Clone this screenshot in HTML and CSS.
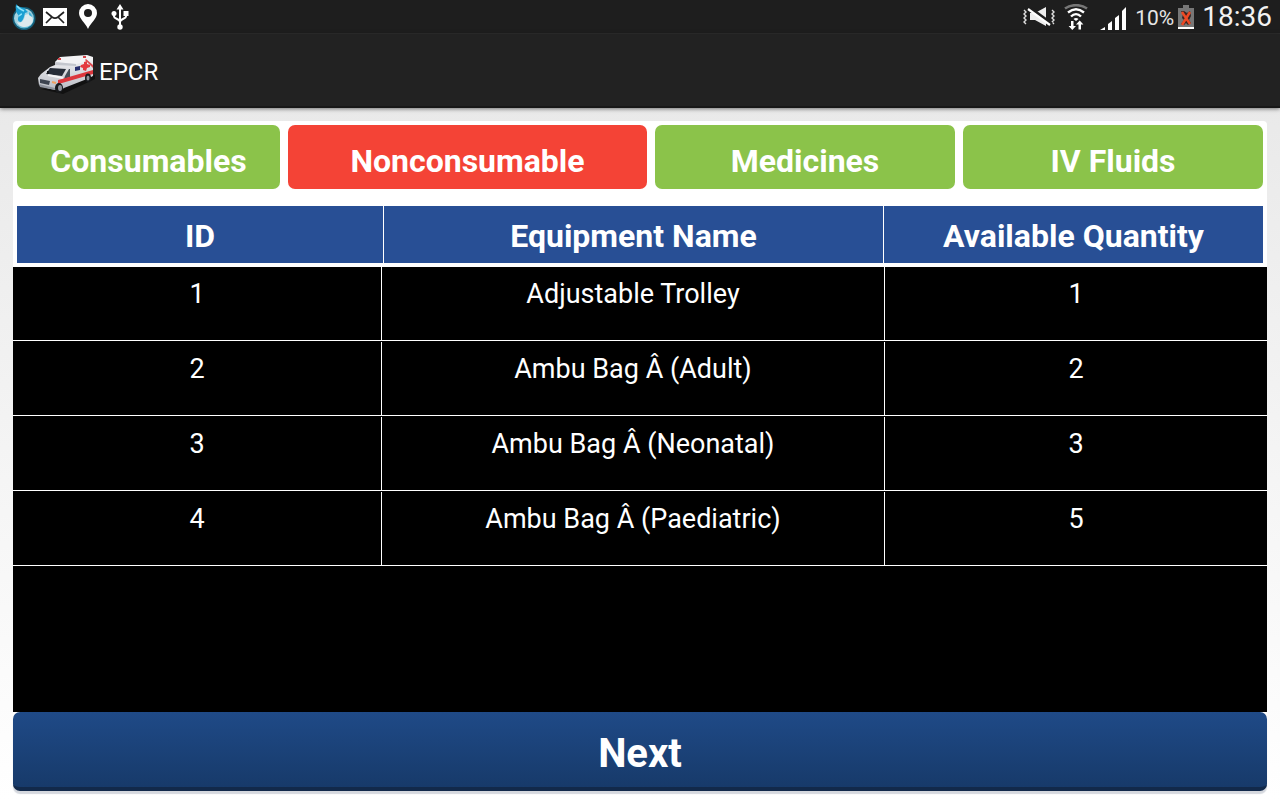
FILE: index.html
```html
<!DOCTYPE html>
<html lang="en">
<head>
<meta charset="utf-8">
<meta name="viewport" content="width=device-width, initial-scale=1">
<title>EPCR</title>
<link rel="stylesheet" href="styles.css">
</head>
<body>
<div class="status-bar">
  <div class="status-left">
    <svg class="icon-globe" width="24" height="26" viewBox="0 0 24 26" role="img" aria-label="Browser">
      <defs>
        <radialGradient id="globe" cx=".45" cy=".4" r=".6"><stop offset="0" stop-color="#8fd3e8"/><stop offset=".7" stop-color="#a9d3df"/><stop offset="1" stop-color="#4fb4d4"/></radialGradient>
      </defs>
      <circle cx="12" cy="14.500" r="11.500" fill="#0f7fa8" opacity=".65"/>
      <circle cx="12" cy="14.500" r="10" fill="url(#globe)"/>
      <path d="M13 11c4-2 8 1 8 5s-4 7-8 7c-4 0-7-2-8-5 4 2 7-1 8-7z" fill="#dceaee"/>
      <path d="M4 0c2 3 5 3 8 4 2 1 2 3 4 4l-3 1c-1 3-1 6-4 9-3 0-4-3-2-6-3-3-4-7-3-12z" fill="#1b9fd2"/>
      <path d="M5 2c2 3 5 4 7 5M7 12c1-1 2-2 3-2" stroke="#8be3fb" stroke-width="1.500" fill="none"/>
      <path d="M17 8c2 1 3 3 3 5l-3-2z" fill="#3fb0d6"/>
    </svg>
    <svg width="24" height="18" viewBox="0 0 24 18" role="img" aria-label="Mail">
      <path d="M0 0h24v18H0z" fill="#fff"/>
      <path d="M3 4l6 5c2 1.500 4 1.500 6 0l6-5M3 15l6-6M21 15l-6-6" fill="none" stroke="#222" stroke-width="1.700"/>
    </svg>
    <svg width="18" height="25" viewBox="0 0 18 25" role="img" aria-label="Location">
      <path fill="#fff" fill-rule="evenodd" d="M9 0a9 9 0 0 1 9 9c0 6-6 9-9 16C6 18 0 15 0 9a9 9 0 0 1 9-9zm0 5a4 4 0 1 0 0 8 4 4 0 0 0 0-8z"/>
    </svg>
    <svg width="18" height="26" viewBox="0 0 18 26" role="img" aria-label="USB">
      <path d="M9 4v18M3 9v3.500c0 2.500 6 2 6 5.500M15 9v3.500c0 2.500-6 2-6 5.500" fill="none" stroke="#fff" stroke-width="2"/>
      <path d="M9 0l3.500 5.500h-7zM12.500 7h5v5h-5z" fill="#fff"/>
      <circle cx="3" cy="9.500" r="2.500" fill="#fff"/><circle cx="9" cy="23" r="2.700" fill="#fff"/>
    </svg>
  </div>
  <div class="status-right">
    <svg width="33" height="20" viewBox="0 0 33 20" role="img" aria-label="Vibrate">
      <path d="M1 3l2 2-2 2 2 2-2 2 2 2-2 2 2 2M29 3l2 2-2 2 2 2-2 2 2 2-2 2 2 2" fill="none" stroke="#ddd" stroke-width="1.400"/>
      <path d="M7 6h5l11-6v19l-11-6H7z" fill="#eee"/>
      <path d="M6 0l23 17" stroke="#1e1e1e" stroke-width="3"/><path d="M5 2l22 16" stroke="#fff" stroke-width="2.200"/>
    </svg>
    <svg width="24" height="26" viewBox="0 0 24 26" role="img" aria-label="Wi-Fi">
      <path d="M1 4.500c6-4.500 16-4.500 22 0" fill="none" stroke="#777" stroke-width="2.500"/>
      <path d="M4 8.500c5-4 11-4 16 0M7 12.500c3-3 7-3 10 0" fill="none" stroke="#fff" stroke-width="2.400"/>
      <path d="M9.500 15c1.500-1.500 3.500-1.500 5 0L12 17z" fill="#fff"/>
      <path d="M7 17h2.500v5H12l-3.700 4-3.700-4H7zM17 25.500h-2.500v-5H12l3.700-4 3.700 4H17z" fill="#fff"/>
    </svg>
    <svg class="icon-signal" width="27" height="24" viewBox="0 0 27 24" role="img" aria-label="Signal">
      <path d="M0 24l5-3v3zM8 18l4-3v9H8zM15 12l4-3v15h-4zM22 5l4-4v23h-4z" fill="#fff"/>
    </svg>
    <span class="battery-text">10%</span>
    <svg width="16" height="24" viewBox="0 0 16 24" role="img" aria-label="Battery low">
      <path d="M5 0h6v3h5v21H0V3h5z" fill="#777"/><path d="M0 22h16v2H0z" fill="#fff"/>
      <path d="M3 6l2 3-1 4 2 2-3 4 3 1 2-2 2 2 3-2-2-3 2-4-1-5-3 2-3-2z" fill="#3a2521"/>
      <path d="M4 7l8 12M12 7L4 20" stroke="#ed4a25" stroke-width="2.500"/>
    </svg>
    <time class="clock">18:36</time>
  </div>
</div>
<header class="action-bar">
  <svg width="57" height="40" viewBox="0 0 57 40" role="img" aria-label="Ambulance">
    <defs>
      <linearGradient id="side" x1="0" y1="0" x2="0" y2="1"><stop offset="0" stop-color="#f4f4f6"/><stop offset="1" stop-color="#b9bcc4"/></linearGradient>
    </defs>
    <path d="M3 35l22 5 32-15v-4L24 33z" fill="#111"/>
    <path d="M17 8l21-2 17-3v19l-6 3-23 9-3 2c-8 0-16-2-22-5l-1-7 3-4 9-7 5-2z" fill="url(#side)"/>
    <path d="M17 8l5-5 27-2 6 2v3l-17 4z" fill="#f3f3f5"/>
    <path d="M17 8l21 2v2l-21-1z" fill="#c4c7ce"/>
    <path d="M12 14l16 1-4 7-16-2z" fill="#262d38"/>
    <path d="M31 15l-4 7-1 3 6-2v-8z" fill="#454d58"/>
    <path d="M37 13l5-1v4l-5 1z" fill="#29306e"/>
    <path d="M10 21l15 3" stroke="#f5f5f7" stroke-width="2"/>
    <path d="M20 26l4-1 31-9v4l-31 9-4 1z" fill="#dc363c"/>
    <path d="M46 8l3-1v3l3 1v2l-3 1-1 3-3-1v-2l-3-1 1-2 3-1z" fill="#e4393f"/>
    <path d="M48 5l7 6v3l-8-8z" fill="#dc4a4f"/>
    <path d="M2 25l10 2-1 4-9-2z" fill="#3d4450"/>
    <path d="M1 30l16 4v2L2 33z" fill="#8e939d"/>
    <path d="M14 28l4 1" stroke="#f0a060" stroke-width="2"/>
    <path d="M20 5h3M45 3h3" stroke="#d4454a" stroke-width="2"/>
    <path d="M9 17h2v3H9z" fill="#15181d"/>
    <ellipse cx="21" cy="34" rx="4" ry="5" fill="#17191c"/><ellipse cx="22" cy="34" rx="2" ry="3" fill="#8d9199"/>
    <ellipse cx="50" cy="24" rx="3" ry="4.500" fill="#17191c"/><ellipse cx="50" cy="24" rx="1.500" ry="2.500" fill="#8d9199"/>
  </svg>
  <h1 class="app-title">EPCR</h1>
</header>
<main class="content">
  <section class="panel">
    <nav class="tabs" aria-label="Categories">
      <button class="tab tab-narrow" type="button">Consumables</button>
      <button class="tab tab-wide tab-active" type="button">Nonconsumable</button>
      <button class="tab" type="button">Medicines</button>
      <button class="tab" type="button">IV Fluids</button>
    </nav>
    <table class="stock">
      <thead>
        <tr><th scope="col">ID</th><th scope="col">Equipment Name</th><th scope="col">Available Quantity</th></tr>
      </thead>
      <tbody>
        <tr><td>1</td><td>Adjustable Trolley</td><td>1</td></tr>
        <tr><td>2</td><td>Ambu Bag Â (Adult)</td><td>2</td></tr>
        <tr><td>3</td><td>Ambu Bag Â (Neonatal)</td><td>3</td></tr>
        <tr><td>4</td><td>Ambu Bag Â (Paediatric)</td><td>5</td></tr>
      </tbody>
    </table>
  </section>
  <button class="next" type="button">Next</button>
</main>
</body>
</html>
```

FILE: styles.css
```css
* { box-sizing: border-box; }

body {
  margin: 0;
  min-height: 100vh;
  display: flex;
  flex-direction: column;
  font-family: Roboto, "Liberation Sans", sans-serif;
  color: #fff;
  background: linear-gradient(#e6e6e6, #fff);
}

.status-bar {
  display: flex;
  justify-content: space-between;
  align-items: center;
  height: 34px;
  padding: 0 8px 0 12px;
  background: #1e1e1e;
  border-bottom: 1px solid #2e2e2e;
}

.status-left, .status-right { display: flex; align-items: center; }
.status-left { gap: 14px; }
.status-left .icon-globe { margin-right: -7px; }
.status-left svg + svg + svg { margin-left: -2px; }
.status-left svg:last-child { margin-left: 0; }
.status-right { gap: 8px; }
.icon-signal { margin: 2px 0 0 4px; }
.battery-text { font-size: 21px; line-height: 24px; padding-top: 2px; margin-right: -4px; color: #e6e6e6; }
.clock { font-size: 28px; line-height: 32px; color: #f2f2f2; }

.action-bar {
  display: flex;
  align-items: center;
  gap: 4px;
  height: 74px;
  padding: 4px 38px 0;
  background: #222;
  border-bottom: 2px solid #181818;
  box-shadow: 0 1px 4px rgba(0, 0, 0, .5);
}

.action-bar svg { margin-top: 4px; }

.app-title { margin: 0; font-size: 24px; font-weight: 400; }

.content {
  flex: 1;
  display: flex;
  flex-direction: column;
  padding: 13px 13px 9px;
}

.panel {
  flex: 1;
  display: flex;
  flex-direction: column;
  background: #fff;
  border-radius: 4px 4px 0 0;
}

.tabs { display: flex; gap: 8px; padding: 4px 4px 17px; }

.tab {
  flex: 300 1 0;
  height: 64px;
  padding: 8px 0 0;
  border: 0;
  border-radius: 7px;
  background: #8bc34a;
  color: #fff;
  font: bold 32px Roboto, "Liberation Sans", sans-serif;
}

.tab-narrow { flex-grow: 263; }
.tab-wide { flex-grow: 359; }
.tab-active { background: #f44336; }

.stock {
  flex: 1;
  display: flex;
  flex-direction: column;
}

.stock tr { display: grid; }
.stock thead { display: block; padding: 0 4px 4px; }
.stock thead tr { grid-template-columns: 367fr 500fr 379fr; }

.stock th {
  height: 57px;
  padding: 0;
  border-right: 1px solid #fff;
  background: #284f95;
  font-size: 32px;
  line-height: 60px;
}

.stock tbody { display: block; flex: 1; background: #000; }
.stock tbody tr { grid-template-columns: 369fr 503fr 382fr; border-bottom: 1px solid #fff; }
.stock tbody tr + tr { padding-top: 1px; }

.stock td {
  height: 73px;
  padding: 0;
  border-right: 1px solid #fff;
  font-size: 27px;
  line-height: 54px;
  text-align: center;
}

.stock th:last-child, .stock td:last-child { border-right: 0; }

.next {
  height: 79px;
  padding: 8px 0 0;
  border: 0;
  border-bottom: 4px solid #12294a;
  border-radius: 7px;
  background: linear-gradient(#1f4a87, #173a6a);
  box-shadow: 0 3px 1px #d5d8de;
  color: #fff;
  font: bold 40px Roboto, "Liberation Sans", sans-serif;
}
```
